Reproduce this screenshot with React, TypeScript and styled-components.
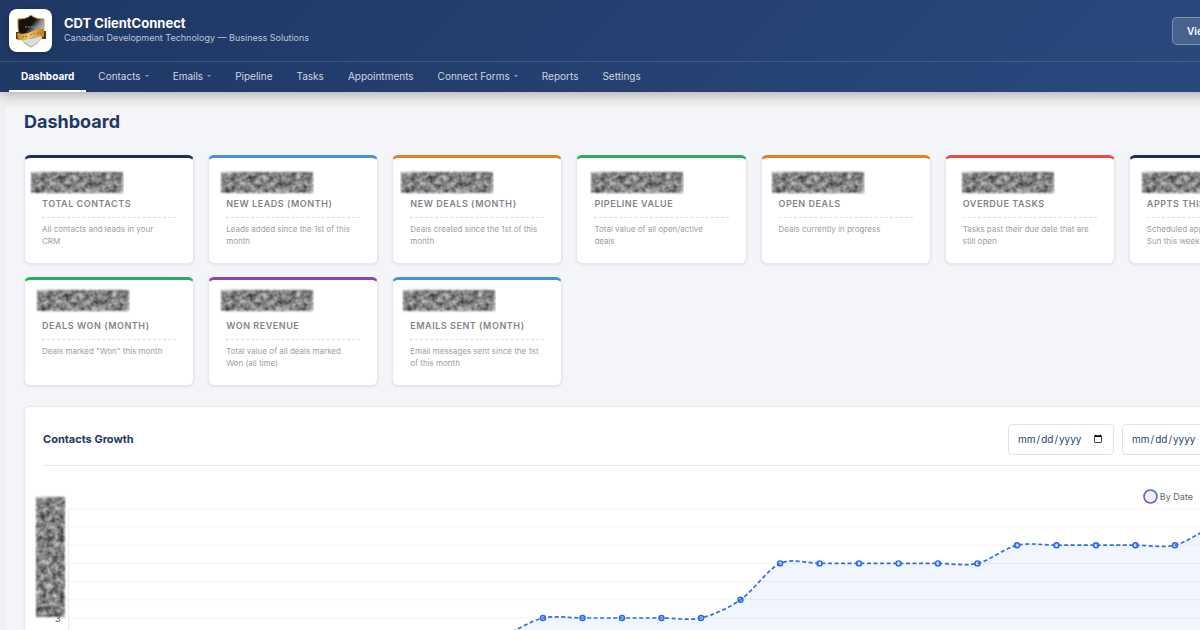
import React from "react";
import styled, { createGlobalStyle } from "styled-components";

interface CardData {
  label: string;
  text: string;
  color: string;
  shift: number;
  second?: boolean;
}

const cards: CardData[] = [
  { label: "Total Contacts", text: "All contacts and leads in your CRM", color: "#1a2f5e", shift: -12 },
  { label: "New Leads (Month)", text: "Leads added since the 1st of this month", color: "#4a90d9", shift: -6 },
  { label: "New Deals (Month)", text: "Deals created since the 1st of this month", color: "#e67e22", shift: -10 },
  { label: "Pipeline Value", text: "Total value of all open/active deals", color: "#27ae60", shift: -4 },
  { label: "Open Deals", text: "Deals currently in progress", color: "#e67e22", shift: -8 },
  { label: "Overdue Tasks", text: "Tasks past their due date that are still open", color: "#e74c3c", shift: -2 },
  { label: "Appts This Week", text: "Scheduled appointments Mon – Sun this week", color: "#1a2f5e", shift: -6 },
  { label: "Deals Won (Month)", text: 'Deals marked "Won" this month', color: "#27ae60", shift: -6, second: true },
  { label: "Won Revenue", text: "Total value of all deals marked Won (all time)", color: "#8e44ad", shift: -6, second: true },
  { label: "Emails Sent (Month)", text: "Email messages sent since the 1st of this month", color: "#4a90d9", shift: -8, second: true },
];

const navItems = [
  { label: "Dashboard", active: true },
  { label: "Contacts", menu: true },
  { label: "Emails", menu: true },
  { label: "Pipeline" },
  { label: "Tasks" },
  { label: "Appointments" },
  { label: "Connect Forms", menu: true },
  { label: "Reports" },
  { label: "Settings" },
];

// contact counts per day, oldest first
const counts = [1, 1, 1, 1, 1, 1, 1, 1, 1, 1, 1, 2, 3, 3, 3, 3, 3, 4, 6, 6, 6, 6, 6, 6, 7, 7, 7, 7, 7, 8, 8];
const STEP = 39.5;
const UNIT = 18.2;
const points = counts.map((c, i) => ({ x: 26 + i * STEP, y: 131 - (c - 3) * UNIT }));
const gridLines = [9, 8, 7, 6, 5, 4, 3, 2, 1, 0];

function curve() {
  const t = 0.3;
  let d = `M${points[0].x} ${points[0].y}`;
  for (let i = 0; i < points.length - 1; i++) {
    const a = points[Math.max(i - 1, 0)];
    const b = points[i];
    const c = points[i + 1];
    const e = points[Math.min(i + 2, points.length - 1)];
    const k = t / 2;
    d += ` C${b.x + (c.x - a.x) * k} ${b.y + (c.y - a.y) * k} ${c.x - (e.x - b.x) * k} ${c.y - (e.y - b.y) * k} ${c.x} ${c.y}`;
  }
  return d;
}

function Noise({ width, height }: { width: number; height: number }) {
  const id = `noise-${width}`;
  return (
    <svg width={width} height={height} viewBox={`0 0 ${width} ${height}`} aria-hidden="true">
      <filter id={id} x="0" y="0" width="100%" height="100%" colorInterpolationFilters="sRGB">
        <feTurbulence type="fractalNoise" baseFrequency="0.17" numOctaves="2" seed="8" />
        <feColorMatrix values="0.8 0 0 0 0.11  0.8 0 0 0 0.11  0.8 0 0 0 0.11  0 0 0 0 1" result="n" />
        <feGaussianBlur in="SourceAlpha" stdDeviation="1" result="m" />
        <feComposite in="n" in2="m" operator="in" />
      </filter>
      <g filter={`url(#${id})`}>
        <rect width={width} height={height} fill="none" />
        <rect x="1" y="2" width={width - 2} height={height - 4} />
      </g>
    </svg>
  );
}

function Shield() {
  return (
    <svg width="34" height="36" viewBox="0 0 34 36" aria-hidden="true">
      <defs>
        <linearGradient id="metal" x1="0" y1="0" x2="1" y2="1">
          <stop offset="0.4" stopColor="#16130f" />
          <stop offset="0.55" stopColor="#8a8b90" />
          <stop offset="0.85" stopColor="#f4f4f4" />
        </linearGradient>
        <linearGradient id="gold" x1="0" y1="0" x2="1" y2="0">
          <stop offset="0" stopColor="#c98a24" />
          <stop offset="0.45" stopColor="#f0cb62" />
          <stop offset="1" stopColor="#bd7d20" />
        </linearGradient>
      </defs>
      <path d="M17 2 C20 5 25 6 30 6 C30 18 31 27 17 34 C3 27 4 18 4 6 C9 6 14 5 17 2 Z" fill="url(#metal)" stroke="#c79a55" strokeWidth="1" />
      <path d="M6 25 C9 29 13 31 17 33 C22 31 26 28 28 24 L17 26 Z" fill="#dcdde0" />
      <path d="M2 19 L6 19 L6 27 L2 26 Z M28 18 L32 18 L32 26 L28 26 Z" fill="#56371b" />
      <path d="M3 20 Q11 22 17 19 Q24 15 30 16 L30 24 Q24 22 17 25 Q11 28 4 27 Z" fill="url(#gold)" />
      <path d="M8 24 L14 23 M16 22 L21 20 M23 20 L27 20" stroke="#a06c1e" strokeWidth="1" strokeDasharray="2 1" />
      <path d="M11 14 H23" stroke="#a99a7f" strokeWidth="1" strokeDasharray="2 1" />
    </svg>
  );
}

function Ring() {
  return (
    <svg width="15" height="15" viewBox="0 0 15 15" aria-hidden="true">
      <linearGradient id="ring" x1="0" y1="1" x2="1" y2="0">
        <stop offset="0.3" stopColor="#8e44c8" />
        <stop offset="0.9" stopColor="#4f6fe0" />
      </linearGradient>
      <circle cx="7.5" cy="7.5" r="6.5" fill="#edf3ff" stroke="url(#ring)" strokeWidth="1.6" />
    </svg>
  );
}

function Chart() {
  const line = curve();
  const end = points[points.length - 1].x;
  return (
    <ChartBox>
      <svg width="1236" height="230" viewBox="0 0 1236 230" role="img" aria-label="Contacts growth by date">
        {gridLines.map((g) => {
          const y = g === 9 ? 22 : 131 - (g - 3) * UNIT;
          return <line key={g} x1="19" x2="1236" y1={y} y2={y} stroke="#f3f4f6" />;
        })}
        <line x1="25.5" x2="25.5" y1="22" y2="186" stroke="#e9eaec" />
        <path d={`${line} L${end} 186 L${points[0].x} 186 Z`} fill="#3b82f6" fillOpacity="0.08" />
        {points.map((p) => (
          <circle key={p.x} cx={p.x} cy={p.y} r="2.5" fill="#dbe8ff" stroke="#2563eb" strokeWidth="1.4" />
        ))}
        <path d={line} fill="none" stroke="#2f6fe4" strokeWidth="1.7" strokeDasharray="4 2.5" />
      </svg>
      <AxisCover>
        <Noise width={31} height={124} />
      </AxisCover>
      <Tick>3</Tick>
    </ChartBox>
  );
}

export default function App() {
  return (
    <>
      <GlobalStyle />
      <Page>
        <Header>
          <BrandBar>
            <LogoBox>
              <Shield />
            </LogoBox>
            <BrandText>
              <BrandName>CDT ClientConnect</BrandName>
              <Tagline>Canadian Development Technology — Business Solutions</Tagline>
            </BrandText>
            <HeaderActions>
              <ViewButton type="button">View Site</ViewButton>
            </HeaderActions>
          </BrandBar>
          <Nav>
            {navItems.map((item) => (
              <NavLink key={item.label} href="#" $active={item.active}>
                {item.label}
                {item.menu && <Caret />}
              </NavLink>
            ))}
          </Nav>
        </Header>
        <Main>
          <PageTitle>Dashboard</PageTitle>
          <CardGrid>
            {cards.map((card) => (
              <Card key={card.label} $color={card.color}>
                <Value $shift={card.shift} $second={card.second}>
                  <Noise width={94} height={25} />
                </Value>
                <CardLabel>{card.label}</CardLabel>
                <CardText>{card.text}</CardText>
              </Card>
            ))}
          </CardGrid>
          <Panel>
            <PanelHead>
              <PanelTitle>Contacts Growth</PanelTitle>
              <DateInput type="date" aria-label="From" />
              <DateInput type="date" aria-label="To" />
            </PanelHead>
            <Legend>
              <Ring />
              By Date
            </Legend>
            <Chart />
          </Panel>
        </Main>
      </Page>
    </>
  );
}

const GlobalStyle = createGlobalStyle`
  * {
    box-sizing: border-box;
  }
  body {
    margin: 0;
    overflow: hidden;
    background: #f0f0f0;
    font-family: Inter, "Liberation Sans", sans-serif;
  }
`;

const Page = styled.div`
  min-width: 1317px;
`;

const Header = styled.header`
  background: linear-gradient(135deg, #1f3864 0%, #2a4a7f 100%);
  box-shadow: 0 2px 12px rgba(0, 0, 0, 0.3);
`;

const BrandBar = styled.div`
  display: flex;
  align-items: center;
  height: 62px;
  padding: 0 9px;
  gap: 12px;
  border-bottom: 1px solid rgba(255, 255, 255, 0.12);
`;

const LogoBox = styled.div`
  display: flex;
  align-items: center;
  justify-content: center;
  width: 43px;
  height: 43px;
  border-radius: 8px;
  background: #fff;
  box-shadow: 0 2px 6px rgba(0, 0, 0, 0.2);
`;

const BrandText = styled.div`
  padding-bottom: 2px;
`;

const BrandName = styled.div`
  font-size: 13px;
  line-height: 16px;
  font-weight: 700;
  color: #fff;
`;

const Tagline = styled.div`
  font-size: 9px;
  line-height: 14px;
  color: #bcc6d6;
`;

const HeaderActions = styled.div`
  display: flex;
  width: 136px;
  margin-left: auto;
`;

const ViewButton = styled.button`
  height: 28px;
  padding: 0 14px;
  border: 1px solid rgba(255, 255, 255, 0.3);
  border-radius: 5px;
  background: rgba(255, 255, 255, 0.15);
  color: #fff;
  font: 600 10px Inter, sans-serif;
`;

const Nav = styled.nav`
  display: flex;
  padding: 0 9px;
`;

const NavLink = styled.a<{ $active?: boolean }>`
  display: flex;
  align-items: center;
  height: 30px;
  padding: 0 12px;
  border-bottom: 2px solid ${(props) => (props.$active ? "#fff" : "transparent")};
  color: ${(props) => (props.$active ? "#fff" : "#cdd5e0")};
  font-size: 10px;
  font-weight: ${(props) => (props.$active ? 700 : 400)};
  text-decoration: none;
`;

const Caret = styled.span`
  margin-left: 4px;
  border: 2px solid transparent;
  border-top-color: #93a1b8;
  border-bottom: 0;
`;

const Main = styled.main`
  margin: 15px 0 0 6px;
  padding: 0 18px 24px;
  background: #f3f5f9;
`;

const PageTitle = styled.h1`
  margin: 0;
  padding-bottom: 18px;
  font-size: 18px;
  line-height: 30px;
  font-weight: 700;
  color: #1f3864;
`;

const CardGrid = styled.div`
  display: grid;
  grid-template-columns: repeat(7, minmax(0, 1fr));
  gap: 13px 14px;
`;

const Card = styled.article<{ $color: string }>`
  min-height: 109px;
  padding: 12px 17px;
  border: 1px solid #e4e8ee;
  border-top: 3px solid ${(props) => props.$color};
  border-radius: 6px;
  background: #fff;
  box-shadow: 0 1px 3px rgba(0, 0, 0, 0.08);
`;

const Value = styled.div<{ $shift: number; $second?: boolean }>`
  height: 28px;
  margin-top: ${(props) => (props.$second ? "-4px" : "0")};
  margin-bottom: ${(props) => (props.$second ? "4px" : "0")};
  margin-left: ${(props) => props.$shift}px;
`;

const CardLabel = styled.h2`
  margin: 0;
  padding-bottom: 7px;
  border-bottom: 1px dashed #dcdfe2;
  font-size: 9px;
  line-height: 12px;
  font-weight: 600;
  letter-spacing: 0.06em;
  text-transform: uppercase;
  color: #7f858c;
`;

const CardText = styled.p`
  margin: 5px 0 0;
  padding-right: 4px;
  font-size: 8px;
  line-height: 12px;
  color: #999fa4;
`;

const Panel = styled.section`
  margin-top: 20px;
  padding: 0 18px;
  border: 1px solid #e4e8ee;
  border-radius: 6px;
  background: #fff;
  box-shadow: 0 1px 3px rgba(0, 0, 0, 0.08);
`;

const PanelHead = styled.div`
  display: flex;
  align-items: center;
  gap: 8px;
  height: 59px;
  padding: 6px 52px 0 0;
  border-bottom: 1px solid #e4e6ea;
`;

const PanelTitle = styled.h2`
  margin: 0 auto 0 0;
  font-size: 11px;
  font-weight: 700;
  color: #1f3864;
`;

const DateInput = styled.input`
  width: 106px;
  height: 31px;
  padding: 0 8px;
  border: 1px solid #dfe4ec;
  border-radius: 4px;
  background: #fff;
  color: #2c4468;
  font: 10px Inter, sans-serif;
`;

const Legend = styled.div`
  display: flex;
  align-items: center;
  justify-content: flex-end;
  gap: 2px;
  height: 22px;
  margin-top: 19px;
  padding-right: 87px;
  font-size: 9px;
  color: #666;
`;

const ChartBox = styled.div`
  position: relative;
  margin-top: -20px;

  svg {
    display: block;
  }
`;

const AxisCover = styled.div`
  position: absolute;
  top: 8px;
  left: -8px;
`;

const Tick = styled.span`
  position: absolute;
  top: 126px;
  left: 12px;
  font-size: 9px;
  line-height: 12px;
  color: #555;
`;
